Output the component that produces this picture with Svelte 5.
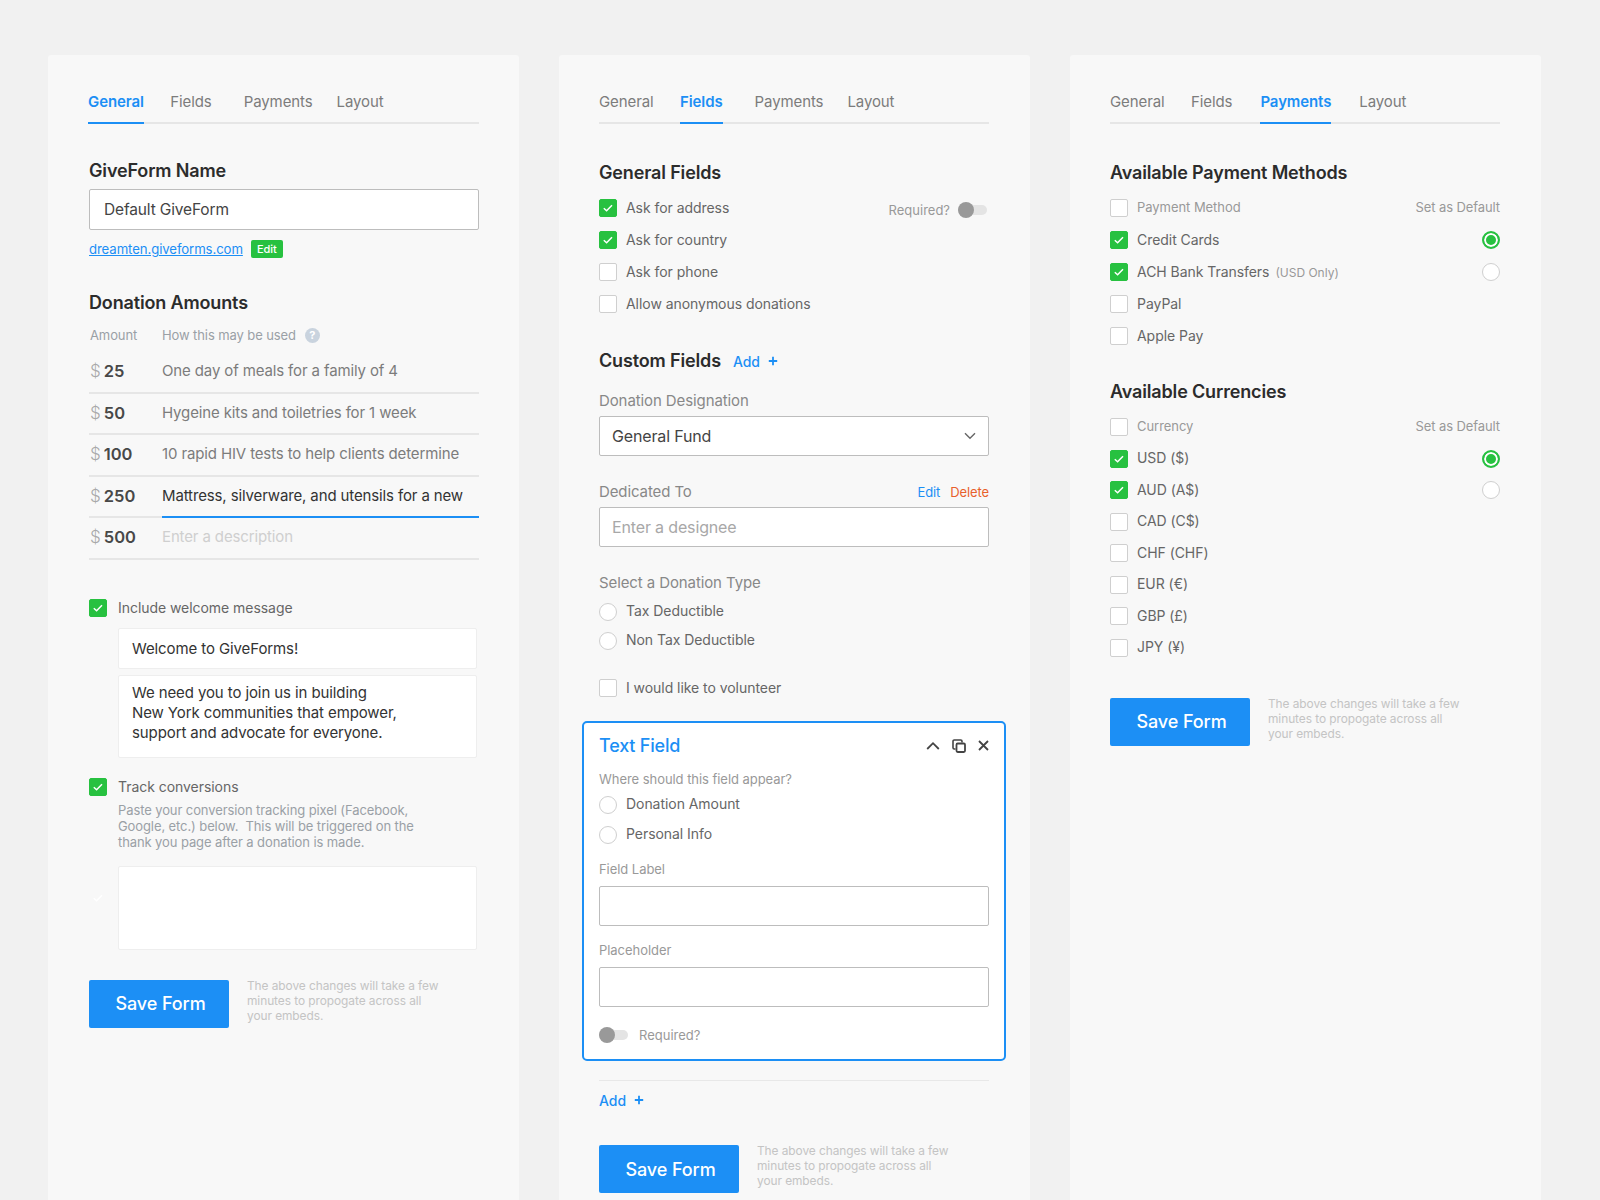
<script lang="ts">
  const tabs = ['General', 'Fields', 'Payments', 'Layout'];

  const amounts = [
    { value: '25', text: 'One day of meals for a family of 4' },
    { value: '50', text: 'Hygeine kits and toiletries for 1 week' },
    { value: '100', text: '10 rapid HIV tests to help clients determine' },
    { value: '250', text: 'Mattress, silverware, and utensils for a new', active: true },
    { value: '500', text: 'Enter a description', empty: true }
  ];

  const generalFields = [
    { label: 'Ask for address', on: true },
    { label: 'Ask for country', on: true },
    { label: 'Ask for phone', on: false },
    { label: 'Allow anonymous donations', on: false }
  ];

  const methods = [
    { label: 'Credit Cards', on: true, def: true },
    { label: 'ACH Bank Transfers', note: '(USD Only)', on: true, def: false },
    { label: 'PayPal' },
    { label: 'Apple Pay' }
  ];

  const currencies = [
    { label: 'USD ($)', on: true, def: true },
    { label: 'AUD (A$)', on: true, def: false },
    { label: 'CAD (C$)' },
    { label: 'CHF (CHF)' },
    { label: 'EUR (€)' },
    { label: 'GBP (£)' },
    { label: 'JPY (¥)' }
  ];
</script>

{#snippet tabBar(current)}
  <nav class="tabs tabs-{current.toLowerCase()}">
    {#each tabs as tab}
      <span class="tab tab-{tab.toLowerCase()}" class:active={tab === current}>{tab}</span>
    {/each}
  </nav>
{/snippet}

{#snippet check(on)}
  <span class="box" class:on>
    {#if on}
      <svg width="18" height="18" viewBox="0 0 18 18"><path d="M4.8 9.2l2.8 2.6 5.4-5.6" fill="none" stroke="#fff" stroke-width="1.5" /></svg>
    {/if}
  </span>
{/snippet}

{#snippet saveRow()}
  <div class="save">
    <button class="save-btn">Save Form</button>
    <p>The above changes will take a few minutes to propogate across all your embeds.</p>
  </div>
{/snippet}

{#snippet toggle()}
  <span class="toggle"><span class="knob"></span></span>
{/snippet}

{#snippet plus()}
  <svg class="plus" width="10" height="10" viewBox="0 0 10 10"><path d="M5 .8v8.4M.8 5h8.4" stroke="#1c8ff5" stroke-width="1.8" /></svg>
{/snippet}

<main class="page">
  <section class="panel panel-a">
    {@render tabBar('General')}

    <h2 class="first-a">GiveForm Name</h2>
    <div class="field name-field">Default GiveForm</div>
    <div class="url">
      <a href="#top">dreamten.giveforms.com</a>
      <span class="badge">Edit</span>
    </div>

    <h2 class="amounts-title">Donation Amounts</h2>
    <div class="amount-head">
      <span class="col-a">Amount</span>
      <span>How this may be used</span>
      <span class="help">?</span>
    </div>
    {#each amounts as row}
      <div class="amount-row">
        <div class="amount-cell"><span class="dollar">$</span><b>{row.value}</b></div>
        <div class="amount-text" class:active={row.active} class:empty={row.empty}>{row.text}</div>
      </div>
    {/each}

    <label class="check-row welcome">
      {@render check(true)}
      <span>Include welcome message</span>
    </label>
    <div class="soft-box title-box">Welcome to GiveForms!</div>
    <div class="soft-box message-box">We need you to join us in building<br />New York communities that empower,<br />support and advocate for everyone.</div>

    <label class="check-row track">
      {@render check(true)}
      <span>Track conversions</span>
    </label>
    <p class="track-help">Paste your conversion tracking pixel (Facebook, Google, etc.) below.&nbsp; This will be triggered on the thank you page after a donation is made.</p>
    <div class="pixel-wrap">
      <svg class="ghost" width="18" height="18" viewBox="0 0 18 18"><path d="M4.8 9.2l2.8 2.6 5.4-5.6" fill="none" stroke="#fff" stroke-width="1.5" /></svg>
      <div class="soft-box pixel-box"></div>
    </div>

    <div class="save-a">{@render saveRow()}</div>
  </section>

  <section class="panel">
    {@render tabBar('Fields')}

    <h2 class="first-b">General Fields</h2>
    <div class="checks">
      {#each generalFields as f, i}
        <div class="list-row">
          {@render check(f.on)}
          <span class="lbl">{f.label}</span>
          {#if i === 0}
            <span class="req-right">Required?</span>
            {@render toggle()}
          {/if}
        </div>
      {/each}
    </div>

    <div class="custom-title">
      <h2>Custom Fields</h2>
      <span class="add">Add {@render plus()}</span>
    </div>

    <div class="cap designation">Donation Designation</div>
    <div class="field select">
      General Fund
      <svg width="12" height="8" viewBox="0 0 12 8"><path d="M1 1.200l5 5 5-5" fill="none" stroke="#666" stroke-width="1.400" /></svg>
    </div>

    <div class="cap dedicated">
      <span>Dedicated To</span>
      <span class="actions"><span class="edit">Edit</span><span class="delete">Delete</span></span>
    </div>
    <div class="field placeholder">Enter a designee</div>

    <div class="cap type">Select a Donation Type</div>
    <div class="radio-row type-first"><span class="radio"></span><span class="lbl">Tax Deductible</span></div>
    <div class="radio-row"><span class="radio"></span><span class="lbl">Non Tax Deductible</span></div>

    <div class="list-row volunteer">
      {@render check(false)}
      <span class="lbl">I would like to volunteer</span>
    </div>

    <div class="card">
      <div class="card-head">
        <h3>Text Field</h3>
        <div class="card-icons">
          <svg width="14" height="10" viewBox="0 0 14 10"><path d="M1.200 8l5.800-5.800L12.800 8" fill="none" stroke="#444" stroke-width="1.800" /></svg>
          <svg width="14" height="14" viewBox="0 0 14 14"><path d="M3.500 10H2.200A1.200 1.200 0 0 1 1 8.800V2.200A1.200 1.200 0 0 1 2.200 1h6.600A1.200 1.200 0 0 1 10 2.200v1.300" fill="none" stroke="#444" stroke-width="1.600" /><rect x="4.500" y="4.500" width="8.500" height="8.500" rx="1.200" fill="none" stroke="#444" stroke-width="1.800" /></svg>
          <svg width="11" height="11" viewBox="0 0 11 11"><path d="M1 1l9 9M10 1l-9 9" fill="none" stroke="#444" stroke-width="1.800" /></svg>
        </div>
      </div>
      <div class="card-cap where">Where should this field appear?</div>
      <div class="radio-row tight"><span class="radio"></span><span class="lbl">Donation Amount</span></div>
      <div class="radio-row tight second"><span class="radio"></span><span class="lbl">Personal Info</span></div>
      <div class="card-cap label-cap">Field Label</div>
      <div class="field blank"></div>
      <div class="card-cap placeholder-cap">Placeholder</div>
      <div class="field blank"></div>
      <div class="card-toggle">
        {@render toggle()}
        <span>Required?</span>
      </div>
    </div>

    <div class="divider"></div>
    <div class="add bottom-add">Add {@render plus()}</div>
    <div class="save-b">{@render saveRow()}</div>
  </section>

  <section class="panel">
    {@render tabBar('Payments')}

    <h2 class="first-b">Available Payment Methods</h2>
    <div class="checks">
      <div class="list-row head">
        {@render check(false)}
        <span class="lbl">Payment Method</span>
        <span class="default-head">Set as Default</span>
      </div>
      {#each methods as m}
        <div class="list-row">
          {@render check(m.on)}
          <span class="lbl">{m.label}</span>
          {#if m.note}<span class="only">{m.note}</span>{/if}
          {#if m.on}<span class="radio end" class:picked={m.def}></span>{/if}
        </div>
      {/each}
    </div>

    <h2 class="currency-title">Available Currencies</h2>
    <div class="checks currencies">
      <div class="list-row head">
        {@render check(false)}
        <span class="lbl">Currency</span>
        <span class="default-head">Set as Default</span>
      </div>
      {#each currencies as c}
        <div class="list-row">
          {@render check(c.on)}
          <span class="lbl">{c.label}</span>
          {#if c.on}<span class="radio end" class:picked={c.def}></span>{/if}
        </div>
      {/each}
    </div>

    <div class="save-c">{@render saveRow()}</div>
  </section>
</main>

<style>
  :global(*) {
    box-sizing: border-box;
  }

  :global(body) {
    background: #f1f1f1;
    font-family: Inter, "Liberation Sans", sans-serif;
    color: #333;
    overflow: hidden;
  }

  .page {
    display: flex;
    gap: 40px;
    height: 1200px;
    padding: 55px 0 0 48px;
    overflow: hidden;
  }

  .panel {
    flex: 0 0 471px;
    min-width: 0;
    height: 1300px;
    padding: 0 41px 0 40px;
    background: #f8f8f8;
    border-radius: 3px;
  }

  .panel-a {
    padding: 0 40px 0 41px;
  }

  .panel-a .tabs {
    margin-left: -1px;
  }

  /* Tabs */
  .tabs {
    display: flex;
    height: 69px;
    padding-top: 37px;
    border-bottom: 2px solid #e6e6e6;
  }

  .tab {
    height: 32px;
    font-size: 15px;
    line-height: 20px;
    color: #7c7c7c;
    letter-spacing: -0.1px;
  }

  .tab-general { margin-right: 26.5px; }
  .tab-fields { margin-right: 32px; }
  .tab-payments { margin-right: 24px; }

  .tabs-payments .tab-fields { margin-right: 28px; }
  .tabs-payments .tab-payments { margin-right: 28px; }

  .tab.active {
    color: #1c8ff5;
    font-weight: 600;
    border-bottom: 2px solid #1c8ff5;
  }

  h2 {
    margin: 0;
    font-size: 18px;
    line-height: 22px;
    font-weight: 600;
    color: #2c2c2c;
    letter-spacing: -0.15px;
  }

  .first-a { margin-top: 36px; }
  .first-b { margin-top: 38px; }

  .field {
    display: flex;
    align-items: center;
    justify-content: space-between;
    height: 41px;
    padding: 0 14px;
    background: #fff;
    border: 1px solid #bdbdbd;
    border-radius: 2px;
    font-size: 15.5px;
    color: #444;
    letter-spacing: -0.15px;
  }

  .name-field {
    margin-top: 7px;
  }

  .url {
    display: flex;
    align-items: center;
    gap: 8px;
    margin-top: 10px;
    height: 18px;
  }

  .url a {
    font-size: 13.2px;
    color: #1c8ff5;
    letter-spacing: -0.1px;
  }

  .badge {
    width: 32px;
    height: 18px;
    line-height: 18px;
    text-align: center;
    font-size: 11px;
    font-weight: 500;
    color: #fff;
    background: #27c140;
    border-radius: 2px;
  }

  /* Donation amounts */
  .amounts-title { margin-top: 34px; }

  .amount-head {
    display: flex;
    align-items: center;
    height: 18px;
    margin-top: 12px;
    margin-bottom: 8px;
    font-size: 13px;
    color: #9aa0a6;
    letter-spacing: -0.1px;
  }

  .col-a { width: 73px; padding-left: 1px; }

  .help {
    width: 15px;
    height: 15px;
    margin-left: 9px;
    border-radius: 50%;
    background: #c9d3de;
    color: #fff;
    font-size: 11px;
    font-weight: 700;
    line-height: 15px;
    text-align: center;
  }

  .amount-row {
    display: flex;
    height: 41.5px;
  }

  .amount-cell {
    width: 73px;
    padding-left: 1px;
    border-bottom: 2px solid #e6e6e6;
    line-height: 39px;
  }

  .dollar {
    font-size: 17px;
    font-weight: 300;
    color: #a9a9a9;
    margin-right: 3px;
  }

  .amount-cell b {
    font-size: 16.5px;
    font-weight: 600;
    color: #484848;
  }

  .amount-text {
    flex: 1;
    border-bottom: 2px solid #e6e6e6;
    font-size: 15px;
    line-height: 38px;
    color: #7c7c7c;
    white-space: nowrap;
    letter-spacing: -0.13px;
  }

  .amount-text.active {
    color: #333;
    border-bottom-color: #1c8ff5;
  }

  .amount-text.empty { color: #cfcfcf; }

  .check-row {
    display: flex;
    align-items: center;
    gap: 11px;
    height: 18px;
    font-size: 14px;
    color: #666;
    letter-spacing: -0.05px;
  }

  .box {
    flex: 0 0 18px;
    width: 18px;
    height: 18px;
    background: #fff;
    border: 1px solid #cfcfcf;
    border-radius: 2px;
  }

  .box svg { display: block; margin: -1px; }

  .box.on {
    background: #27c140;
    border-color: #27c140;
  }

  .welcome { margin-top: 39px; }

  .soft-box {
    margin-left: 29px;
    width: 359px;
    padding: 0 13px;
    background: #fff;
    border: 1px solid #eeeeee;
    border-radius: 2px;
    font-size: 15px;
    color: #333;
    letter-spacing: -0.1px;
  }

  .title-box {
    height: 41px;
    margin-top: 11px;
    line-height: 39px;
  }

  .message-box {
    height: 83px;
    margin-top: 6px;
    padding-top: 7px;
    line-height: 20px;
  }

  .track { margin-top: 20px; }

  .track-help {
    margin: 6px 0 0 29px;
    width: 300px;
    font-size: 13px;
    line-height: 16px;
    color: #9aa0a6;
    letter-spacing: -0.1px;
  }

  .pixel-wrap {
    position: relative;
    margin-top: 16px;
  }

  .ghost {
    position: absolute;
    left: 0;
    top: 23px;
  }

  .pixel-box { height: 84px; }

  .save {
    display: flex;
    gap: 18px;
  }

  .save-btn {
    flex: 0 0 140px;
    height: 48px;
    padding: 0 0 0 3px;
    border: 0;
    border-radius: 2px;
    background: #1c8ff5;
    color: #fff;
    font: 500 18px Inter, "Liberation Sans", sans-serif;
    letter-spacing: -0.1px;
  }

  .save p {
    margin: -2px 0 0;
    width: 200px;
    font-size: 11.9px;
    line-height: 15px;
    color: #c4c4c4;
    letter-spacing: -0.06px;
  }

  .save-a { margin-top: 30px; }
  .save-b { margin-top: 36px; }
  .save-c { margin-top: 41px; }

  /* Checkbox lists */
  .checks { margin-top: 15px; }

  .list-row {
    display: flex;
    align-items: center;
    height: 18px;
    margin-bottom: 14px;
  }

  .currencies .list-row { margin-bottom: 13.5px; }

  .lbl {
    margin-left: 9px;
    font-size: 14px;
    color: #666;
    letter-spacing: -0.05px;
  }

  .list-row .lbl { margin-bottom: 2px; }

  .head .lbl { font-size: 13px; color: #999; }

  .default-head {
    margin: 0 0 2px auto;
    font-size: 13px;
    color: #999;
    letter-spacing: -0.1px;
  }

  .only {
    margin-left: 6px;
    font-size: 12px;
    color: #999;
  }

  .req-right {
    margin: 3px 8px 0 auto;
    font-size: 13px;
    color: #999;
  }

  .toggle {
    position: relative;
    display: inline-block;
    flex: 0 0 29px;
    width: 29px;
    height: 10px;
    border-radius: 5px;
    background: #e4e4e4;
  }

  .list-row .toggle { margin: 3px 2px 0 0; }

  .knob {
    position: absolute;
    left: 0;
    top: -3px;
    width: 16px;
    height: 16px;
    border-radius: 50%;
    background: #999;
  }

  .custom-title {
    display: flex;
    align-items: center;
    gap: 12px;
    margin-top: 37px;
  }

  .add {
    display: flex;
    align-items: center;
    gap: 8px;
    font-size: 14px;
    font-weight: 500;
    color: #1c8ff5;
  }

  .cap {
    font-size: 15px;
    line-height: 20px;
    color: #888;
    letter-spacing: -0.1px;
  }

  .designation { margin-top: 19px; }

  .select {
    height: 40px;
    margin-top: 5px;
    padding: 0 12px;
    font-size: 16px;
  }

  .dedicated {
    display: flex;
    justify-content: space-between;
    align-items: center;
    margin-top: 26px;
  }

  .actions { display: flex; gap: 10px; font-size: 13px; }
  .edit { color: #1c8ff5; }
  .delete { color: #e8602c; }

  .placeholder {
    height: 40px;
    margin-top: 5px;
    padding: 0 12px;
    font-size: 16px;
    color: #a8a8a8;
  }

  .type { margin-top: 26px; }

  .radio-row {
    display: flex;
    align-items: center;
    height: 18px;
    margin-top: 11px;
  }

  .radio-row .radio { margin-top: 3px; }

  .radio-row.type-first { margin-top: 8px; }
  .radio-row.tight { margin-top: 7px; }
  .radio-row.second { margin-top: 12px; }

  .radio {
    flex: 0 0 18px;
    width: 18px;
    height: 18px;
    border: 1px solid #cfcfcf;
    border-radius: 50%;
    background: #fff;
  }

  .radio.end { margin-left: auto; }

  .radio.picked {
    background: #27c140;
    border: 2px solid #27c140;
    box-shadow: inset 0 0 0 2px #fff;
  }

  .volunteer {
    margin-top: 31px;
    margin-bottom: 0;
  }

  /* Text field card */
  .card {
    width: 424px;
    height: 340px;
    margin: 24px 0 0 -17px;
    padding: 10px 15px 0;
    background: #fff;
    border: 2px solid #1c8ff5;
    border-radius: 5px;
  }

  .card-head {
    display: flex;
    align-items: center;
    justify-content: space-between;
    height: 24px;
  }

  .card-head h3 {
    margin: 0;
    font-size: 18px;
    font-weight: 500;
    color: #1c8ff5;
    letter-spacing: -0.2px;
  }

  .card-icons {
    display: flex;
    align-items: center;
    gap: 12px;
    margin-top: 1px;
  }

  .card-cap {
    font-size: 13px;
    line-height: 16px;
    color: #999;
    letter-spacing: -0.05px;
  }

  .where { margin-top: 14px; }
  .label-cap { margin-top: 19px; }
  .placeholder-cap { margin-top: 16px; }

  .blank {
    height: 40px;
    margin-top: 9px;
  }

  .card-toggle {
    display: flex;
    align-items: center;
    gap: 11px;
    margin-top: 20px;
    font-size: 13px;
    color: #999;
  }

  .divider {
    height: 1px;
    margin-top: 19px;
    background: #e8e8e8;
  }

  .bottom-add { margin-top: 10px; height: 18px; }

  .currency-title { margin-top: 36px; }
</style>
